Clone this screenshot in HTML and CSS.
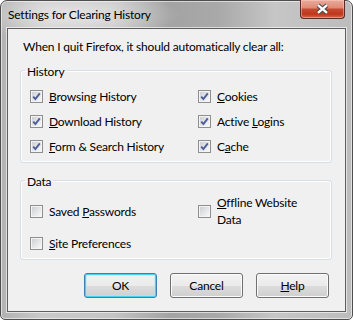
FILE: index.html
```html
<!DOCTYPE html>
<html>
<head>
<meta charset="utf-8">
<link rel="stylesheet" href="styles.css">
</head>
<body>
<div class="window">
  <div class="titlebar">
    <span class="title">Settings for Clearing History</span>
    <button class="close" aria-label="Close">
      <svg width="15" height="12" viewBox="0 0 15 12">
        <path d="M3 2.2 L12 9.8 M12 2.2 L3 9.8" stroke="#4b4b4b" stroke-width="4.4" fill="none"/>
        <path d="M3 2.2 L12 9.8 M12 2.2 L3 9.8" stroke="#ffffff" stroke-width="2.4" fill="none"/>
      </svg>
    </button>
  </div>
  <div class="client">
    <p class="intro">When I quit Firefox, it should automatically clear all:</p>
    <fieldset class="group">
      <legend>History</legend>
      <div class="grid">
        <label class="item"><span class="cb"><svg width="11" height="11" viewBox="0 0 11 11"><path d="M2.2 5.6 L4.4 8 L8.8 2.4" stroke="#4c5f99" stroke-width="1.9" fill="none"/></svg></span><span><u>B</u>rowsing History</span></label>
        <label class="item"><span class="cb"><svg width="11" height="11" viewBox="0 0 11 11"><path d="M2.2 5.6 L4.4 8 L8.8 2.4" stroke="#4c5f99" stroke-width="1.9" fill="none"/></svg></span><span><u>C</u>ookies</span></label>
        <label class="item"><span class="cb"><svg width="11" height="11" viewBox="0 0 11 11"><path d="M2.2 5.6 L4.4 8 L8.8 2.4" stroke="#4c5f99" stroke-width="1.9" fill="none"/></svg></span><span><u>D</u>ownload History</span></label>
        <label class="item"><span class="cb"><svg width="11" height="11" viewBox="0 0 11 11"><path d="M2.2 5.6 L4.4 8 L8.8 2.4" stroke="#4c5f99" stroke-width="1.9" fill="none"/></svg></span><span>Active <u>L</u>ogins</span></label>
        <label class="item"><span class="cb"><svg width="11" height="11" viewBox="0 0 11 11"><path d="M2.2 5.6 L4.4 8 L8.8 2.4" stroke="#4c5f99" stroke-width="1.9" fill="none"/></svg></span><span><u>F</u>orm &amp; Search History</span></label>
        <label class="item"><span class="cb"><svg width="11" height="11" viewBox="0 0 11 11"><path d="M2.2 5.6 L4.4 8 L8.8 2.4" stroke="#4c5f99" stroke-width="1.9" fill="none"/></svg></span><span>C<u>a</u>che</span></label>
      </div>
    </fieldset>
    <fieldset class="group data">
      <legend>Data</legend>
      <div class="grid">
        <label class="item"><span class="cb"></span><span>Saved <u>P</u>asswords</span></label>
        <label class="item"><span class="cb"></span><span class="wrap"><u>O</u>ffline Website Data</span></label>
        <label class="item"><span class="cb"></span><span><u>S</u>ite Preferences</span></label>
      </div>
    </fieldset>
    <div class="buttons">
      <button class="btn default">OK</button>
      <button class="btn">Cancel</button>
      <button class="btn"><u>H</u>elp</button>
    </div>
  </div>
</div>
</body>
</html>
```
FILE: styles.css
```css
html, body {
  margin: 0;
  padding: 0;
  background: #ffffff;
}
body {
  font: 12px/15px Lato, "Noto Sans", sans-serif;
  letter-spacing: -0.2px;
  color: #000;
}
.window {
  width: 353px;
  height: 320px;
  box-sizing: border-box;
  border: 1px solid #4e4e4e;
  border-radius: 7px 7px 5px 5px;
  padding: 0 6px 7px;
  display: flex;
  flex-direction: column;
  background:
    radial-gradient(ellipse 110px 26px at 70px 14px, rgba(255,255,255,0.55), rgba(255,255,255,0) 100%),
    linear-gradient(90deg, #b2b2b2 0%, #c9c9c9 12%, #c4c4c4 32%, #a3a3a3 48%, #a9a9a9 62%, #c6c6c6 78%, #bcbcbc 100%);
  box-shadow: inset 0 0 0 1px rgba(255,255,255,0.55);
}
.titlebar {
  height: 27px;
  flex: none;
  display: flex;
  justify-content: space-between;
  align-items: flex-start;
}
.title {
  padding: 6px 0 0 1px;
  color: #000;
}
.close {
  width: 45px;
  height: 19px;
  margin: -1px 1px 0 0;
  padding: 0;
  border: 1px solid #5b2a22;
  border-top: 0;
  border-radius: 0 0 4px 4px;
  background: linear-gradient(#e9ab9c 0%, #df8c77 42%, #c8492f 52%, #be371c 78%, #d5674a 100%);
  box-shadow: inset 0 0 0 1px rgba(255,210,200,0.45);
  display: flex;
  align-items: center;
  justify-content: center;
}
.close svg { display: block; }
.client {
  flex: 1;
  border: 1px solid #5e5e5e;
  background: #f0f0f0;
  box-shadow: 0 0 0 1px rgba(255,255,255,0.6);
  padding: 10px 13px 12px 12px;
  display: flex;
  flex-direction: column;
}
.intro {
  margin: 0 0 7px;
  padding-left: 3px;
}
.group {
  margin: 0;
  min-width: 0;
  border: 1px solid #d5dfe5;
  border-radius: 3px;
  padding: 5px 0 3px 9px;
  box-shadow: inset 0 0 0 1px #ffffff;
}
.group legend {
  padding: 3px 2px 0;
  margin-left: -5px;
  line-height: 15px;
}
.data {
  margin-top: 8px;
}
.grid {
  display: grid;
  grid-template-columns: 168px 1fr;
}
.data .grid {
  row-gap: 3px;
}
.item {
  display: flex;
  align-items: center;
  gap: 6px;
  min-height: 25px;
}
.wrap {
  max-width: 96px;
  line-height: 17px;
}
.cb {
  flex: none;
  width: 13px;
  height: 13px;
  box-sizing: border-box;
  border: 1px solid #8e8f8f;
  background: linear-gradient(135deg, #c6cace 0%, #e4e5e7 50%, #fbfbfb 100%);
  box-shadow: inset 0 0 0 1px #f4f4f4;
  display: flex;
  align-items: center;
  justify-content: center;
}
.cb svg { display: block; }
u {
  text-decoration: underline;
  text-decoration-thickness: 1px;
  text-underline-offset: 1px;
}
.buttons {
  margin: 13px 3px 0 0;
  display: flex;
  justify-content: flex-end;
  gap: 13px;
}
.btn {
  width: 73px;
  height: 25px;
  box-sizing: border-box;
  padding: 0;
  font: 12px/15px Lato, "Noto Sans", sans-serif;
  letter-spacing: -0.2px;
  color: #000;
  border: 1px solid #707070;
  border-radius: 3px;
  background: linear-gradient(#f2f2f2 0%, #ebebeb 50%, #dddddd 50%, #cfcfcf 100%);
  box-shadow: inset 0 0 0 1px #fbfbfb;
}
.btn.default {
  border-color: #3c7fb1;
  box-shadow: inset 0 0 0 1px #48d0f5, inset 0 0 0 2px rgba(170,230,250,0.5);
}
```
